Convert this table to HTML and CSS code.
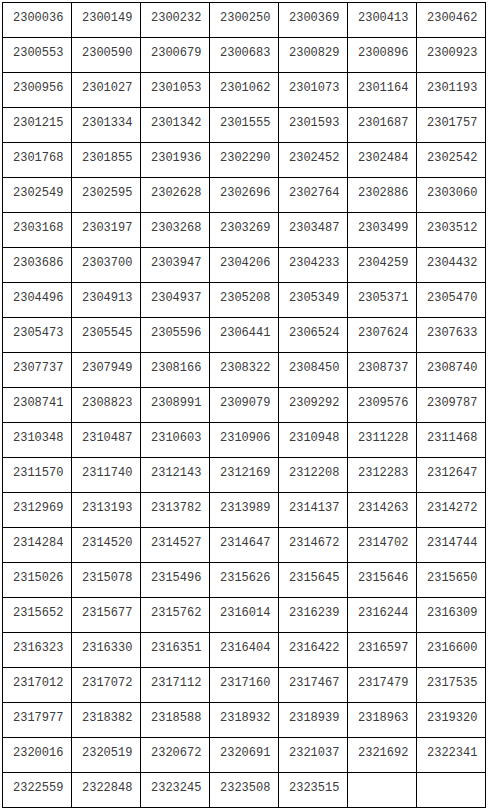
FILE: index.html
```html
<!DOCTYPE html>
<html>
<head>
<meta charset="utf-8">
<link rel="stylesheet" href="styles.css">
</head>
<body>
<table class="grid">
<tbody>
<tr><td>2300036</td><td>2300149</td><td>2300232</td><td>2300250</td><td>2300369</td><td>2300413</td><td>2300462</td></tr>
<tr><td>2300553</td><td>2300590</td><td>2300679</td><td>2300683</td><td>2300829</td><td>2300896</td><td>2300923</td></tr>
<tr><td>2300956</td><td>2301027</td><td>2301053</td><td>2301062</td><td>2301073</td><td>2301164</td><td>2301193</td></tr>
<tr><td>2301215</td><td>2301334</td><td>2301342</td><td>2301555</td><td>2301593</td><td>2301687</td><td>2301757</td></tr>
<tr><td>2301768</td><td>2301855</td><td>2301936</td><td>2302290</td><td>2302452</td><td>2302484</td><td>2302542</td></tr>
<tr><td>2302549</td><td>2302595</td><td>2302628</td><td>2302696</td><td>2302764</td><td>2302886</td><td>2303060</td></tr>
<tr><td>2303168</td><td>2303197</td><td>2303268</td><td>2303269</td><td>2303487</td><td>2303499</td><td>2303512</td></tr>
<tr><td>2303686</td><td>2303700</td><td>2303947</td><td>2304206</td><td>2304233</td><td>2304259</td><td>2304432</td></tr>
<tr><td>2304496</td><td>2304913</td><td>2304937</td><td>2305208</td><td>2305349</td><td>2305371</td><td>2305470</td></tr>
<tr><td>2305473</td><td>2305545</td><td>2305596</td><td>2306441</td><td>2306524</td><td>2307624</td><td>2307633</td></tr>
<tr><td>2307737</td><td>2307949</td><td>2308166</td><td>2308322</td><td>2308450</td><td>2308737</td><td>2308740</td></tr>
<tr><td>2308741</td><td>2308823</td><td>2308991</td><td>2309079</td><td>2309292</td><td>2309576</td><td>2309787</td></tr>
<tr><td>2310348</td><td>2310487</td><td>2310603</td><td>2310906</td><td>2310948</td><td>2311228</td><td>2311468</td></tr>
<tr><td>2311570</td><td>2311740</td><td>2312143</td><td>2312169</td><td>2312208</td><td>2312283</td><td>2312647</td></tr>
<tr><td>2312969</td><td>2313193</td><td>2313782</td><td>2313989</td><td>2314137</td><td>2314263</td><td>2314272</td></tr>
<tr><td>2314284</td><td>2314520</td><td>2314527</td><td>2314647</td><td>2314672</td><td>2314702</td><td>2314744</td></tr>
<tr><td>2315026</td><td>2315078</td><td>2315496</td><td>2315626</td><td>2315645</td><td>2315646</td><td>2315650</td></tr>
<tr><td>2315652</td><td>2315677</td><td>2315762</td><td>2316014</td><td>2316239</td><td>2316244</td><td>2316309</td></tr>
<tr><td>2316323</td><td>2316330</td><td>2316351</td><td>2316404</td><td>2316422</td><td>2316597</td><td>2316600</td></tr>
<tr><td>2317012</td><td>2317072</td><td>2317112</td><td>2317160</td><td>2317467</td><td>2317479</td><td>2317535</td></tr>
<tr><td>2317977</td><td>2318382</td><td>2318588</td><td>2318932</td><td>2318939</td><td>2318963</td><td>2319320</td></tr>
<tr><td>2320016</td><td>2320519</td><td>2320672</td><td>2320691</td><td>2321037</td><td>2321692</td><td>2322341</td></tr>
<tr><td>2322559</td><td>2322848</td><td>2323245</td><td>2323508</td><td>2323515</td><td></td><td></td></tr>
</tbody>
</table>
</body>
</html>
```
FILE: styles.css
```css
html, body {
  background: #ffffff;
}
body {
  margin: 2px;
}
.grid {
  border-collapse: collapse;
  table-layout: fixed;
  width: 484px;
}
.grid td {
  width: 68px;
  height: 35px;
  box-sizing: border-box;
  border: 1px solid #000000;
  padding: 8px 0 0 10px;
  vertical-align: top;
  font-family: "Liberation Mono", "DejaVu Sans Mono", monospace;
  font-size: 12px;
  line-height: 14px;
  color: #3a3a3a;
  white-space: nowrap;
  overflow: hidden;
}
```
